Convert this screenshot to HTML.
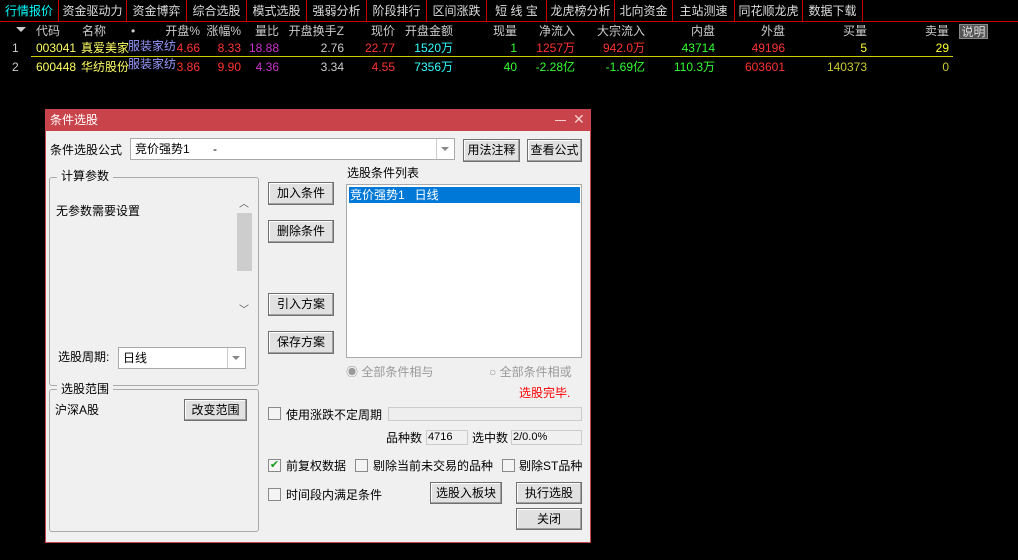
<!DOCTYPE html>
<html><head><meta charset="utf-8"><style>
*{margin:0;padding:0;box-sizing:border-box}
body{width:1018px;height:560px;background:#000;position:relative;overflow:hidden;font-family:"Liberation Sans","Noto Sans CJK SC","WenQuanYi Zen Hei",sans-serif;font-size:12px}
.a{position:absolute;white-space:nowrap;line-height:14px}
.tab{position:absolute;top:0;height:22px;border-right:1px solid #c00;color:#ddd;font-size:12px;line-height:22px;text-align:center}
.h{color:#ccc;text-align:right}
.r{text-align:right}
.btn{position:absolute;background:#e1e1e1;border:1px solid #707070;box-shadow:inset -1px -1px 0 #a0a0a0,inset 1px 1px 0 #fff;color:#000;font-size:12px;line-height:20px;text-align:center}
.dlg{color:#000}
.cb{position:absolute;width:13px;height:13px;border:1px solid #8a8a8a;background:#f4f4f4}
.grp{position:absolute;border:1px solid #aaa;border-radius:3px}
</style></head><body>
<div class="tab" style="left:0;width:59px;color:#0ff">行情报价</div>
<div class="tab" style="left:59px;width:68px">资金驱动力</div>
<div class="tab" style="left:127px;width:60px">资金博弈</div>
<div class="tab" style="left:187px;width:60px">综合选股</div>
<div class="tab" style="left:247px;width:60px">模式选股</div>
<div class="tab" style="left:307px;width:60px">强弱分析</div>
<div class="tab" style="left:367px;width:60px">阶段排行</div>
<div class="tab" style="left:427px;width:60px">区间涨跌</div>
<div class="tab" style="left:487px;width:60px">短 线 宝</div>
<div class="tab" style="left:547px;width:68px">龙虎榜分析</div>
<div class="tab" style="left:615px;width:58px">北向资金</div>
<div class="tab" style="left:673px;width:62px">主站测速</div>
<div class="tab" style="left:735px;width:68px">同花顺龙虎</div>
<div class="tab" style="left:803px;width:60px">数据下载</div>
<div style="position:absolute;left:0;top:21px;width:1018px;height:1px;background:#c00"></div>
<div class="a" style="left:16px;top:27px;width:0;height:0;border-left:5px solid transparent;border-right:5px solid transparent;border-top:5px solid #ccc"></div>
<div class="a h" style="left:36px;top:24px;text-align:left">代码</div>
<div class="a h" style="left:82px;top:24px;text-align:left">名称</div>
<div class="a" style="left:131px;top:24px;color:#ccc">•</div>
<div class="a h" style="right:818px;top:24px">开盘%</div>
<div class="a h" style="right:777px;top:24px">涨幅%</div>
<div class="a h" style="right:739px;top:24px">量比</div>
<div class="a h" style="right:674px;top:24px">开盘换手Z</div>
<div class="a h" style="right:623px;top:24px">现价</div>
<div class="a h" style="right:565px;top:24px">开盘金额</div>
<div class="a h" style="right:501px;top:24px">现量</div>
<div class="a h" style="right:443px;top:24px">净流入</div>
<div class="a h" style="right:373px;top:24px">大宗流入</div>
<div class="a h" style="right:303px;top:24px">内盘</div>
<div class="a h" style="right:233px;top:24px">外盘</div>
<div class="a h" style="right:151px;top:24px">买量</div>
<div class="a h" style="right:69px;top:24px">卖量</div>
<div class="a" style="left:959px;top:24px;width:29px;height:15px;background:#555;color:#ddd;text-align:center;border:1px solid #888">说明</div>
<div class="a" style="left:12px;top:41px;color:#ccc">1</div>
<div class="a" style="left:36px;top:41px;color:#ff6">003041</div>
<div class="a" style="left:81px;top:41px;color:#ff6">真爱美家</div>
<div class="a" style="left:128px;top:39px;color:#99f">服装家纺</div>
<div class="a r" style="right:818px;top:41px;color:#f33">4.66</div>
<div class="a r" style="right:777px;top:41px;color:#f33">8.33</div>
<div class="a r" style="right:739px;top:41px;color:#c3c">18.88</div>
<div class="a r" style="right:674px;top:41px;color:#ccc">2.76</div>
<div class="a r" style="right:623px;top:41px;color:#f33">22.77</div>
<div class="a r" style="right:565px;top:41px;color:#3ff">1520万</div>
<div class="a r" style="right:501px;top:41px;color:#3f3">1</div>
<div class="a r" style="right:443px;top:41px;color:#f33">1257万</div>
<div class="a r" style="right:373px;top:41px;color:#f33">942.0万</div>
<div class="a r" style="right:303px;top:41px;color:#3f3">43714</div>
<div class="a r" style="right:233px;top:41px;color:#f33">49196</div>
<div class="a r" style="right:151px;top:41px;color:#ff3">5</div>
<div class="a r" style="right:69px;top:41px;color:#ff3">29</div>
<div style="position:absolute;left:31px;top:56px;width:922px;height:1px;background:#cc0"></div>
<div class="a" style="left:12px;top:60px;color:#ccc">2</div>
<div class="a" style="left:36px;top:60px;color:#ff6">600448</div>
<div class="a" style="left:81px;top:60px;color:#ff6">华纺股份</div>
<div class="a" style="left:128px;top:57px;color:#99f">服装家纺</div>
<div class="a r" style="right:818px;top:60px;color:#f33">3.86</div>
<div class="a r" style="right:777px;top:60px;color:#f33">9.90</div>
<div class="a r" style="right:739px;top:60px;color:#c3c">4.36</div>
<div class="a r" style="right:674px;top:60px;color:#ccc">3.34</div>
<div class="a r" style="right:623px;top:60px;color:#f33">4.55</div>
<div class="a r" style="right:565px;top:60px;color:#3ff">7356万</div>
<div class="a r" style="right:501px;top:60px;color:#3f3">40</div>
<div class="a r" style="right:443px;top:60px;color:#3f3">-2.28亿</div>
<div class="a r" style="right:373px;top:60px;color:#3f3">-1.69亿</div>
<div class="a r" style="right:303px;top:60px;color:#3f3">110.3万</div>
<div class="a r" style="right:233px;top:60px;color:#f33">603601</div>
<div class="a r" style="right:151px;top:60px;color:#cc3">140373</div>
<div class="a r" style="right:69px;top:60px;color:#cc3">0</div>
<!-- dialog: inner origin (46,110) -->
<div style="position:absolute;left:45px;top:109px;width:546px;height:434px;background:#f0f0f0;border:1px solid #c9434a">
<div style="position:absolute;left:0;top:0;width:544px;height:21px;background:#c9434a;color:#fff;line-height:21px;padding-left:4px">条件选股</div>
<div style="position:absolute;left:509px;top:10px;width:11px;height:1px;background:#f3d0d0"></div>
<div class="a" style="left:527px;top:2px;color:#f3d0d0;font-size:14px">✕</div>
<div class="a dlg" style="left:4px;top:33px">条件选股公式</div>
<div style="position:absolute;left:84px;top:28px;width:325px;height:22px;background:#fff;border:1px solid #aaa"><span class="a" style="left:4px;top:3px">竞价强势1&nbsp;&nbsp;&nbsp;&nbsp;&nbsp;&nbsp;&nbsp;-</span><div style="position:absolute;right:0;top:0;width:18px;height:20px;border-left:1px solid #ccc"></div><div style="position:absolute;right:5px;top:8px;border-left:4px solid transparent;border-right:4px solid transparent;border-top:4px solid #888"></div></div>
<div class="btn" style="left:417px;top:29px;width:57px;height:23px">用法注释</div>
<div class="btn" style="left:481px;top:29px;width:55px;height:23px">查看公式</div>
<div class="grp" style="left:3px;top:67px;width:210px;height:209px"></div>
<div class="a dlg" style="left:11px;top:59px;background:#f0f0f0;padding:0 4px">计算参数</div>
<div class="a dlg" style="left:10px;top:94px">无参数需要设置</div>
<div class="a" style="left:193px;top:88px;color:#555;font-size:10px">︿</div>
<div style="position:absolute;left:191px;top:103px;width:15px;height:58px;background:#cdcdcd"></div>
<div class="a" style="left:193px;top:194px;color:#555;font-size:10px">﹀</div>
<div class="a dlg" style="left:12px;top:240px">选股周期:</div>
<div style="position:absolute;left:72px;top:237px;width:128px;height:22px;background:#fff;border:1px solid #aaa"><span class="a" style="left:4px;top:3px">日线</span><div style="position:absolute;right:0;top:0;width:18px;height:20px;border-left:1px solid #ccc"></div><div style="position:absolute;right:5px;top:8px;border-left:4px solid transparent;border-right:4px solid transparent;border-top:4px solid #888"></div></div>
<div class="btn" style="left:222px;top:72px;width:66px;height:23px">加入条件</div>
<div class="btn" style="left:222px;top:110px;width:66px;height:23px">删除条件</div>
<div class="btn" style="left:222px;top:183px;width:66px;height:23px">引入方案</div>
<div class="btn" style="left:222px;top:221px;width:66px;height:23px">保存方案</div>
<div class="a dlg" style="left:301px;top:56px">选股条件列表</div>
<div style="position:absolute;left:300px;top:74px;width:236px;height:174px;background:#fff;border:1px solid #aaa"><div style="position:absolute;left:2px;top:2px;width:231px;height:16px;background:#0078d7;color:#fff;line-height:16px;padding-left:1px">竞价强势1&nbsp;&nbsp;&nbsp;日线</div></div>
<div class="a" style="left:300px;top:255px;color:#999">◉ 全部条件相与</div>
<div class="a" style="left:443px;top:255px;color:#999">○ 全部条件相或</div>
<div class="a" style="left:473px;top:276px;color:#f00">选股完毕.</div>
<div class="grp" style="left:3px;top:279px;width:210px;height:143px"></div>
<div class="a dlg" style="left:11px;top:272px;background:#f0f0f0;padding:0 4px">选股范围</div>
<div class="a dlg" style="left:9px;top:293px">沪深A股</div>
<div class="btn" style="left:138px;top:289px;width:63px;height:22px">改变范围</div>
<div class="cb" style="left:222px;top:297px"></div>
<div class="a dlg" style="left:240px;top:298px">使用涨跌不定周期</div>
<div style="position:absolute;left:342px;top:297px;width:194px;height:14px;border:1px solid #ccc;background:#eee"></div>
<div class="a dlg" style="left:340px;top:321px">品种数</div>
<div style="position:absolute;left:380px;top:320px;width:42px;height:15px;border:1px solid #ccc;font-size:11px;line-height:13px;padding-left:1px">4716</div>
<div class="a dlg" style="left:426px;top:321px">选中数</div>
<div style="position:absolute;left:465px;top:320px;width:71px;height:15px;border:1px solid #ccc;font-size:11px;line-height:13px;padding-left:1px">2/0.0%</div>
<div class="cb" style="left:222px;top:349px;color:#1a9b1a;font-size:11px;line-height:11px;text-align:center">✔</div>
<div class="a dlg" style="left:240px;top:349px">前复权数据</div>
<div class="cb" style="left:309px;top:349px"></div>
<div class="a dlg" style="left:327px;top:349px">剔除当前未交易的品种</div>
<div class="cb" style="left:456px;top:349px"></div>
<div class="a dlg" style="left:473px;top:349px">剔除ST品种</div>
<div class="cb" style="left:222px;top:378px"></div>
<div class="a dlg" style="left:240px;top:378px">时间段内满足条件</div>
<div class="btn" style="left:384px;top:372px;width:72px;height:22px">选股入板块</div>
<div class="btn" style="left:470px;top:372px;width:66px;height:22px">执行选股</div>
<div class="btn" style="left:470px;top:398px;width:66px;height:22px">关闭</div>
</div>
</body></html>
